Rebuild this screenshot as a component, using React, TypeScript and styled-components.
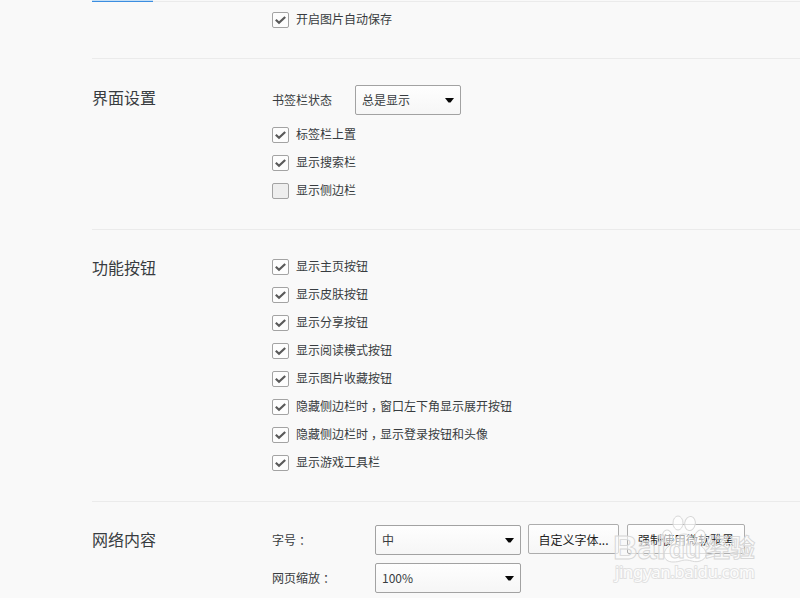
import React from 'react';
import styled, { createGlobalStyle } from 'styled-components';

const GlobalStyle = createGlobalStyle`
  * { box-sizing: border-box; }
  html, body { margin: 0; padding: 0; overflow: hidden; }
  body {
    background: #f9f9f9;
    color: #383c40;
    font: 12px/18px "Noto Sans CJK SC", sans-serif;
  }
`;

const Page = styled.main`
  position: relative;
  width: 800px;
  height: 600px;
  padding-left: 92px;
  overflow: hidden;
  border-bottom: 2px solid #fefefe;
`;

const TabLine = styled.div`
  height: 2px;
  border-bottom: 1px solid #ebebeb;
  display: flex;
`;

const ActiveTab = styled.div`
  width: 61px;
  height: 2px;
  background: linear-gradient(#c4dff6 50%, #3b8de0 50%);
`;

const Section = styled.section<{ $height: number; $top: number }>`
  display: grid;
  grid-template-columns: 180px 1fr;
  height: ${(p) => p.$height}px;
  padding-top: ${(p) => p.$top}px;
  border-bottom: 1px solid #ebebeb;

  &:last-of-type {
    border-bottom: 0;
  }
`;

const Title = styled.h2<{ $top?: number }>`
  margin: 0;
  padding-top: ${(p) => p.$top ?? 0}px;
  font-size: 16px;
  font-weight: 400;
  line-height: 24px;
`;

const Options = styled.div`
  display: flex;
  flex-direction: column;
`;

const CheckRow = styled.label`
  display: flex;
  align-items: center;
  gap: 7px;
  height: 28px;
  white-space: nowrap;
`;

const Box = styled.span<{ $checked: boolean }>`
  display: flex;
  width: 17px;
  height: 16px;
  border: 1px solid #a3a3a3;
  border-radius: 2px;
  background: ${(p) => (p.$checked ? '#fdfdfd' : '#eeeeee')};
`;

const Caption = styled.span`
  line-height: 18px;
  margin-top: -2px;
`;

const Mark = styled.span`
  display: inline-block;
  width: 12px;
  padding-left: 3px;
`;

const FieldRow = styled.div<{ $label: number; $height: number }>`
  display: grid;
  grid-template-columns: ${(p) => p.$label}px auto auto auto;
  justify-content: start;
  align-items: start;
  height: ${(p) => p.$height}px;
`;

const FieldLabel = styled.span`
  line-height: 30px;
  white-space: nowrap;
`;

const Select = styled.div<{ $width: number }>`
  display: flex;
  align-items: center;
  justify-content: space-between;
  width: ${(p) => p.$width}px;
  height: 30px;
  padding: 0 6px;
  border: 1px solid #a2a2a2;
  border-radius: 2px;
  background: linear-gradient(#fefefe, #f6f6f6);
`;

const Button = styled.button<{ $width: number; $left: number }>`
  width: ${(p) => p.$width}px;
  height: 30px;
  margin: -1px 0 0 ${(p) => p.$left}px;
  padding: 1px 0 0;
  border: 1px solid #adadad;
  border-radius: 2px;
  background: linear-gradient(#fefefe, #f6f6f6);
  color: #222;
  font: inherit;
  white-space: nowrap;
`;

const Watermark = styled.svg`
  position: absolute;
  left: 608px;
  top: 508px;
`;

const Tick = () => (
  <svg width="15" height="14" viewBox="0 0 15 14">
    <path d="M2.8 6.8 L6 9.8 L12.2 4" fill="none" stroke="#5a5a5a" strokeWidth="2.2" />
  </svg>
);

const Arrow = () => (
  <svg width="9" height="5" viewBox="0 0 9 5">
    <path d="M0 0H9L5.5 4.5H3.5Z" fill="#080808" />
  </svg>
);

const withMarks = (text: string) =>
  text.split(/([，：])/).map((part, i) =>
    part === '，' || part === '：' ? <Mark key={i}>{part}</Mark> : part,
  );

const Check = ({ text, checked = true }: { text: string; checked?: boolean }) => (
  <CheckRow>
    <Box $checked={checked}>{checked && <Tick />}</Box>
    <Caption>{withMarks(text)}</Caption>
  </CheckRow>
);

const Dropdown = ({ value, width }: { value: string; width: number }) => (
  <Select $width={width}>
    <span>{value}</span>
    <Arrow />
  </Select>
);

const buttonOptions = [
  '显示主页按钮',
  '显示皮肤按钮',
  '显示分享按钮',
  '显示阅读模式按钮',
  '显示图片收藏按钮',
  '隐藏侧边栏时，窗口左下角显示展开按钮',
  '隐藏侧边栏时，显示登录按钮和头像',
  '显示游戏工具栏',
];

const BrandMark = () => (
  <Watermark width="160" height="84" viewBox="0 0 160 84">
    <g fill="#fff" fillOpacity="0.6" stroke="#d8d8d8" strokeWidth="1">
      <ellipse cx="59.5" cy="29" rx="5" ry="7" transform="rotate(-12 59.5 29)" />
      <ellipse cx="70" cy="15" rx="5" ry="7" />
      <ellipse cx="82" cy="15.5" rx="5.3" ry="7" transform="rotate(10 82 15.5)" />
      <ellipse cx="92" cy="29" rx="5.3" ry="7" transform="rotate(14 92 29)" />
      <path d="M76 26C69 26 67 33 61 38C53 44 55 54 65 54C72 54 73 52 78 52C83 52 86 55 92 53C101 50 99 42 93 38C86 33 84 26 76 26Z" />
    </g>
    <g
      fill="#fcfcfc"
      fillOpacity="0.6"
      stroke="#d6d6d6"
      strokeWidth="0.9"
      fontFamily="Liberation Sans, Noto Sans CJK SC, sans-serif"
      fontWeight="700"
    >
      <text x="5" y="51" fontSize="33" textLength="53" lengthAdjust="spacingAndGlyphs">Bai</text>
      <text x="61" y="50" fontSize="25" textLength="32" lengthAdjust="spacingAndGlyphs">du</text>
      <text x="97" y="49" fontSize="25" textLength="50" fontFamily="Noto Sans CJK SC, sans-serif">经验</text>
    </g>
    <text
      x="7"
      y="70"
      fontSize="17"
      textLength="140"
      fill="#fcfcfc"
      stroke="#e0e0e0"
      strokeWidth="1.8"
      paintOrder="stroke"
      fontFamily="Noto Sans, sans-serif"
    >
      jingyan.baidu.com
    </text>
  </Watermark>
);

export default function App() {
  return (
    <>
      <GlobalStyle />
      <Page>
        <TabLine>
          <ActiveTab />
        </TabLine>
        <Section $height={57} $top={4}>
          <span />
          <Options>
            <Check text="开启图片自动保存" />
          </Options>
        </Section>
        <Section $height={171} $top={26}>
          <Title>界面设置</Title>
          <Options>
            <FieldRow $label={83} $height={36}>
              <FieldLabel>书签栏状态</FieldLabel>
              <Dropdown value="总是显示" width={106} />
            </FieldRow>
            <Check text="标签栏上置" />
            <Check text="显示搜索栏" />
            <Check text="显示侧边栏" checked={false} />
          </Options>
        </Section>
        <Section $height={272} $top={23}>
          <Title $top={2}>功能按钮</Title>
          <Options>
            {buttonOptions.map((text) => (
              <Check key={text} text={text} />
            ))}
          </Options>
        </Section>
        <Section $height={96} $top={23}>
          <Title $top={2}>网络内容</Title>
          <Options>
            <FieldRow $label={103} $height={38}>
              <FieldLabel>{withMarks('字号：')}</FieldLabel>
              <Dropdown value="中" width={146} />
              <Button $width={91} $left={7}>自定义字体...</Button>
              <Button $width={118} $left={8}>强制使用微软雅黑</Button>
            </FieldRow>
            <FieldRow $label={103} $height={30}>
              <FieldLabel>{withMarks('网页缩放：')}</FieldLabel>
              <Dropdown value="100%" width={146} />
            </FieldRow>
          </Options>
        </Section>
        <BrandMark />
      </Page>
    </>
  );
}
